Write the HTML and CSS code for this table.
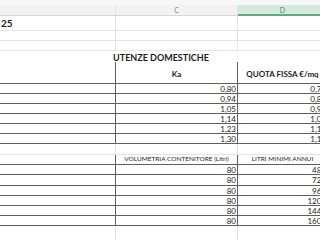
FILE: index.html
```html
<!DOCTYPE html>
<html>
<head>
<meta charset="utf-8">
<link rel="stylesheet" href="styles.css">
</head>
<body>
<div class="topstrip"></div>
<div class="sheet">
  <div class="colhead"></div><div class="colhead">C</div><div class="colhead sel">D</div>

  <div class="cell bold big">25</div><div class="cell"></div><div class="cell"></div>
  <div class="cell"></div><div class="cell"></div><div class="cell"></div>
  <div class="cell"></div><div class="cell"></div><div class="cell"></div>

  <div class="cell merged title">UTENZE DOMESTICHE</div>

  <div class="cell b"></div><div class="cell b hdr bold">Ka</div><div class="cell b hdr bold">QUOTA FISSA €/mq</div>

  <div class="cell b"></div><div class="cell b num">0,80</div><div class="cell b num">0,73</div>
  <div class="cell b"></div><div class="cell b num">0,94</div><div class="cell b num">0,86</div>
  <div class="cell b"></div><div class="cell b num">1,05</div><div class="cell b num">0,96</div>
  <div class="cell b"></div><div class="cell b num">1,14</div><div class="cell b num">1,04</div>
  <div class="cell b"></div><div class="cell b num">1,23</div><div class="cell b num">1,12</div>
  <div class="cell b"></div><div class="cell b num">1,30</div><div class="cell b num">1,19</div>

  <div class="cell"></div><div class="cell"></div><div class="cell"></div>

  <div class="cell b"></div><div class="cell b ctr small">VOLUMETRIA CONTENITORE (Litri)</div><div class="cell b ctr small">LITRI MINIMI ANNUI</div>

  <div class="cell b"></div><div class="cell b num">80</div><div class="cell b num">480</div>
  <div class="cell b"></div><div class="cell b num">80</div><div class="cell b num">720</div>
  <div class="cell b"></div><div class="cell b num">80</div><div class="cell b num">960</div>
  <div class="cell b"></div><div class="cell b num">80</div><div class="cell b num">1200</div>
  <div class="cell b"></div><div class="cell b num">80</div><div class="cell b num">1440</div>
  <div class="cell b"></div><div class="cell b num">80</div><div class="cell b num">1600</div>

  <div class="cell"></div><div class="cell"></div><div class="cell"></div>
</div>
</body>
</html>
```
FILE: styles.css
```css
html, body {
  margin: 0;
  padding: 0;
  background: #ffffff;
  overflow: hidden;
}
body {
  width: 320px;
  height: 240px;
  font-family: Lato, "Liberation Sans", sans-serif;
  color: #1c1c1c;
}
.topstrip {
  height: 5px;
  background: #f7f7f7;
}
.sheet {
  display: grid;
  grid-template-columns: 116px 122px 90px;
  grid-template-rows: 11px 15px 10px 10px 11px 22px repeat(6, 10px) 11px 10px 10px 11px 10px 10px 10px 10px 20px;
  font-size: 8px;
}
.colhead {
  background: #f2f2f2;
  border-bottom: 1px solid #d6d6d6;
  border-right: 1px solid #e2e2e2;
  color: #8c8c8c;
  font-size: 7px;
  display: flex;
  align-items: center;
  justify-content: center;
  box-sizing: border-box;
}
.colhead.sel {
  background: #d4ecdf;
  color: #3f8c5f;
  border-bottom: 2px solid #5eab7e;
}
.cell {
  box-sizing: border-box;
  border-right: 1px solid #e3e3e3;
  border-bottom: 1px solid #e3e3e3;
  display: flex;
  align-items: center;
  overflow: hidden;
  white-space: nowrap;
  line-height: 1;
}
.cell.b {
  border-right-color: #5f5f5f;
  border-bottom-color: #5f5f5f;
}
.num {
  justify-content: flex-end;
  padding-right: 1px;
}
.ctr {
  justify-content: center;
}
.hdr {
  justify-content: center;
  align-items: flex-end;
  padding-bottom: 5px;
}
.bold {
  font-weight: 700;
}
.big {
  font-size: 10px;
  padding-left: 1px;
}
.merged {
  grid-column: 1 / -1;
  border-right: none;
  border-bottom: none;
}
.title {
  justify-content: center;
  font-weight: 700;
  font-size: 9px;
  padding-right: 6px;
  align-items: flex-end;
}
.small {
  font-size: 6.5px;
}
```
